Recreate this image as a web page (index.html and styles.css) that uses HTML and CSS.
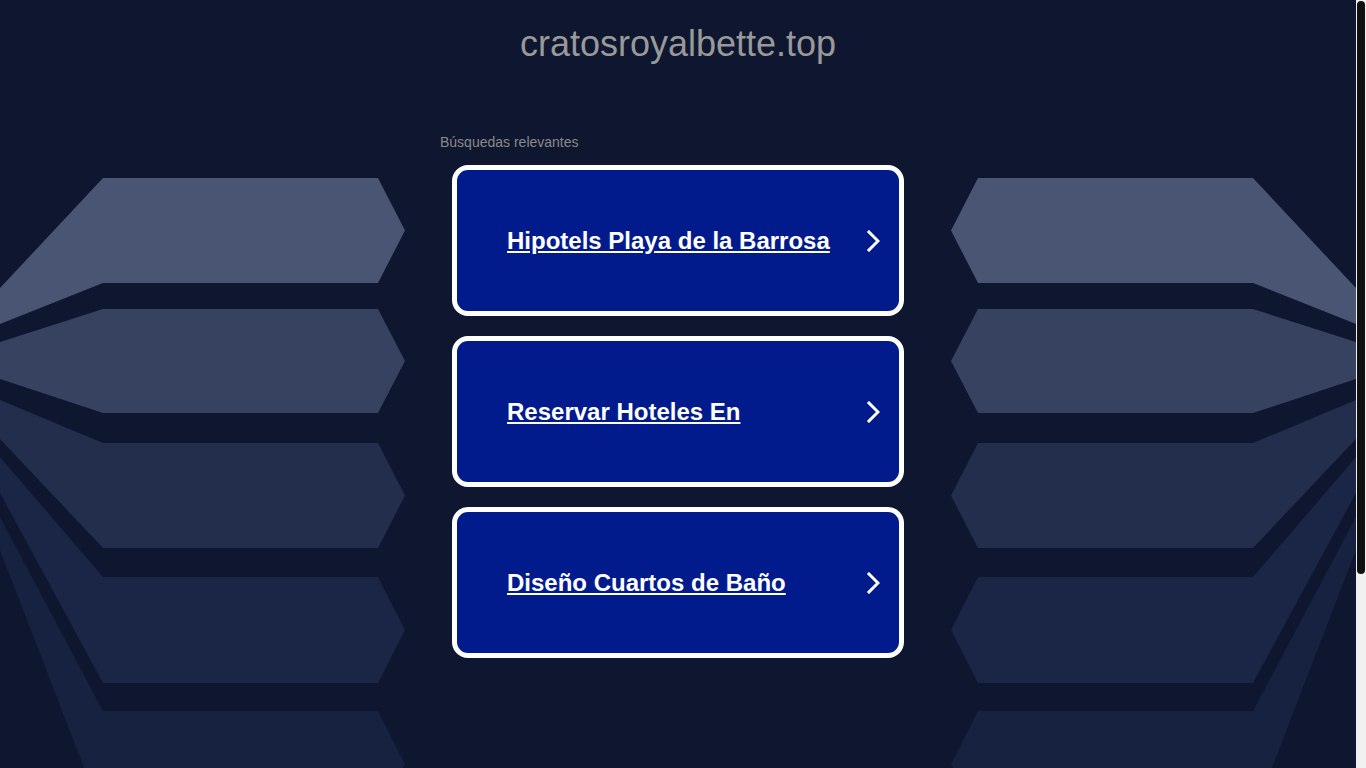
FILE: index.html
```html
<!DOCTYPE html>
<html lang="es">
<head>
  <meta charset="UTF-8" />
  <meta name="viewport" content="width=device-width, initial-scale=1.0"/>
  <title>cratosroyalbette.top</title>
  <link rel="stylesheet" href="styles.css">
</head>
<body>
  <div class="page">
    <!-- decorative background shapes -->
    <svg class="backdrop" viewBox="0 0 1356 830" aria-hidden="true">
      <g id="side">
        <polygon fill="#4a5574" points="103,178 378,178 405,230.5 378,283 103,283 0,324 0,288"/>
        <polygon fill="#36425f" points="103,309 378,309 405,361 378,413 103,413 0,379 0,342"/>
        <polygon fill="#232e4d" points="103,443 378,443 405,495.5 378,548 103,548 0,439 0,400"/>
        <polygon fill="#1b2545" points="103,577 378,577 405,630 378,683 103,683 0,493 0,457"/>
        <polygon fill="#172241" points="103,711 378,711 405,764 378,817 103,817 0,550 0,517"/>
      </g>
      <use href="#side" transform="translate(1356,0) scale(-1,1)"/>
    </svg>

    <h1 class="domain">cratosroyalbette.top</h1>

    <div class="searches">
      <div class="searches-label">Búsquedas relevantes</div>

      <a class="result" href="#">
        <span class="result-text">Hipotels Playa de la Barrosa</span>
        <svg class="chevron" width="14" height="22" viewBox="0 0 14 22"><path d="M3 2 L12 11 L3 20"/></svg>
      </a>

      <a class="result" href="#">
        <span class="result-text">Reservar Hoteles En</span>
        <svg class="chevron" width="14" height="22" viewBox="0 0 14 22"><path d="M3 2 L12 11 L3 20"/></svg>
      </a>

      <a class="result" href="#">
        <span class="result-text">Diseño Cuartos de Baño</span>
        <svg class="chevron" width="14" height="22" viewBox="0 0 14 22"><path d="M3 2 L12 11 L3 20"/></svg>
      </a>
    </div>
  </div>

  <div class="scrollbar"><div class="scrollbar-thumb"></div></div>
</body>
</html>
```

FILE: styles.css
```css
html {
  background: #0e1630;
  overflow: hidden;
}

body {
  margin: 0;
  font-family: Arial, "Liberation Sans", sans-serif;
  background: #0e1630;
  color: #ffffff;
}

.page {
  position: relative;
  width: calc(100% - 10px);
  height: 100vh;
  overflow: hidden;
}

.backdrop {
  position: absolute;
  top: 0;
  left: 0;
  width: 1356px;
  height: 830px;
}

.domain {
  position: relative;
  margin: 0;
  padding-top: 23px;
  font-size: 36px;
  line-height: 42px;
  font-weight: normal;
  text-align: center;
  color: #999999;
}

.searches {
  position: relative;
  width: 476px;
  margin: 69px auto 0;
}

.searches-label {
  font-size: 14px;
  line-height: 16px;
  color: #8a8a8a;
  margin-bottom: 15px;
}

.result {
  display: flex;
  align-items: center;
  box-sizing: border-box;
  height: 151px;
  margin: 0 12px 20px;
  padding: 0 19px 0 50px;
  background: #021b8c;
  border: 5px solid #ffffff;
  border-radius: 16px;
  color: #ffffff;
  text-decoration: none;
}

.result-text {
  flex: 1;
  font-size: 24px;
  font-weight: bold;
  text-decoration: underline;
}

.chevron path {
  fill: none;
  stroke: #ffffff;
  stroke-width: 3;
  stroke-linecap: square;
  stroke-linejoin: miter;
}

/* page scrollbar as it shows in the capture */
.scrollbar {
  position: fixed;
  top: 0;
  right: 0;
  bottom: 0;
  width: 10px;
  background: #f1f1f1;
}

.scrollbar-thumb {
  margin: 1px 1px 0 1px;
  height: 573px;
  background: #111111;
  border-radius: 4px;
}
```
